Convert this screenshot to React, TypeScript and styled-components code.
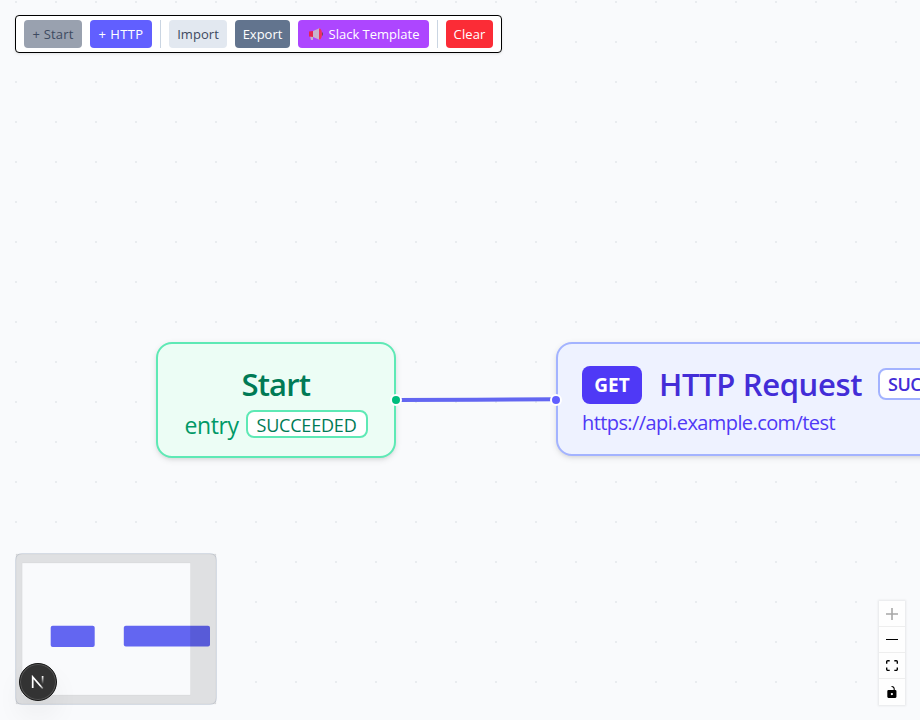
import React from "react";
import styled, { createGlobalStyle } from "styled-components";

const GlobalStyle = createGlobalStyle`
  * { box-sizing: border-box; }
  body { margin: 0; overflow: hidden; font-family: "Open Sans", "Noto Sans", sans-serif; }
`;

const Canvas = styled.main`
  position: relative;
  width: 920px;
  height: 720px;
  overflow: hidden;
  background: #f9fafc;
`;

const Layer = styled.svg`
  position: absolute;
  inset: 0;
  width: 920px;
  height: 720px;
`;

const Toolbar = styled.div`
  position: absolute;
  left: 15px;
  top: 15px;
  width: 487px;
  height: 38px;
  display: flex;
  align-items: center;
  gap: 8px;
  padding: 0 8px;
  background: #fff;
  border: 1px solid #000;
  border-radius: 4px;
  box-shadow: 0 1px 3px rgba(0, 0, 0, 0.1);
`;

const ToolButton = styled.button<{ $w: number; $bg: string; $fg?: string; $ls?: number }>`
  display: flex;
  flex: none;
  align-items: center;
  justify-content: center;
  width: ${(p) => p.$w}px;
  height: 28px;
  padding: 0;
  border: 0;
  border-radius: 4px;
  background: ${(p) => p.$bg};
  color: ${(p) => p.$fg ?? "#fff"};
  font: 500 13px/20px "Open Sans", "Noto Sans", sans-serif;
  letter-spacing: ${(p) => p.$ls ?? 0}px;
  white-space: pre;
`;

const Divider = styled.span`
  flex: none;
  width: 1px;
  height: 28px;
  background: #cad5e2;
`;

const MegaphoneIcon = styled.svg`
  flex: none;
  width: 15px;
  height: 14px;
  margin-right: 6px;
`;

const Node = styled.section<{ $x: number; $w: number; $h: number; $bg: string; $line: string }>`
  position: absolute;
  left: ${(p) => p.$x}px;
  top: 342px;
  width: ${(p) => p.$w}px;
  height: ${(p) => p.$h}px;
  border: 2px solid ${(p) => p.$line};
  border-radius: 16px;
  background: ${(p) => p.$bg};
  box-shadow: 0 2px 6px rgba(0, 0, 0, 0.1), 0 2px 4px -2px rgba(0, 0, 0, 0.1);
`;

const StartBody = styled.div`
  display: flex;
  flex-direction: column;
  align-items: center;
  padding-top: 20px;
`;

const HttpBody = styled.div`
  padding: 22px 24px;
`;

const Row = styled.div<{ $gap: number; $h: number }>`
  display: flex;
  align-items: center;
  gap: ${(p) => p.$gap}px;
  height: ${(p) => p.$h}px;
  white-space: nowrap;
`;

const Title = styled.div<{ $color: string; $w: number; $ls: number }>`
  flex: none;
  width: ${(p) => p.$w}px;
  height: 42px;
  color: ${(p) => p.$color};
  font-size: 31px;
  font-weight: 600;
  line-height: 40px;
  letter-spacing: ${(p) => p.$ls}px;
  white-space: nowrap;
`;

const Entry = styled.span`
  width: 55px;
  color: #009966;
  font-size: 23px;
  line-height: 32px;
  letter-spacing: -0.4px;
  padding-top: 2px;
`;

const Status = styled.span<{ $w: number; $h: number; $line: string; $fg: string; $weight: number; $ls: number }>`
  flex: none;
  display: flex;
  align-items: center;
  width: ${(p) => p.$w}px;
  height: ${(p) => p.$h}px;
  border: 2px solid ${(p) => p.$line};
  border-radius: 8px;
  background: #fff;
  color: ${(p) => p.$fg};
  font-size: 18px;
  line-height: 24px;
  font-weight: ${(p) => p.$weight};
  letter-spacing: ${(p) => p.$ls}px;
`;

const EntryStatus = styled(Status)`
  padding: 1px 0 0 9px;
`;

const RequestStatus = styled(Status)`
  margin-bottom: 2px;
  padding: 0 0 0 8px;
`;

const Method = styled.span`
  flex: none;
  display: flex;
  align-items: center;
  justify-content: center;
  width: 60px;
  height: 38px;
  border-radius: 8px;
  background: #4f39f6;
  color: #fff;
  font-size: 19px;
  font-weight: 700;
`;

const Url = styled.div`
  margin-top: 4px;
  color: #4f39f6;
  font-size: 20px;
  line-height: 30px;
  letter-spacing: -0.59px;
`;

const Port = styled.i<{ $x: number; $bg: string }>`
  position: absolute;
  left: ${(p) => p.$x}px;
  top: 394px;
  width: 12px;
  height: 12px;
  border: 2px solid #fff;
  border-radius: 50%;
  background: ${(p) => p.$bg};
`;

const MiniMap = styled.div`
  position: absolute;
  left: 15px;
  top: 553px;
  width: 202px;
  height: 152px;
  border: 1px solid #d9dfe8;
  border-radius: 7px;
  background: #f9fafc;

  svg { display: block; overflow: visible; }
`;

const Badge = styled.div`
  position: absolute;
  left: 19px;
  top: 663px;
  width: 38px;
  height: 38px;
  display: flex;
  align-items: center;
  justify-content: center;
  border: 1px solid #151515;
  border-radius: 50%;
  background: #333;
  box-shadow: inset 0 0 0 1px #555, 0 16px 32px -8px rgba(0, 0, 0, 0.16);
`;

const Controls = styled.div`
  position: absolute;
  right: 15px;
  bottom: 15px;
  display: flex;
  flex-direction: column;
  width: 26px;
  box-shadow: 0 0 2px 1px rgba(0, 0, 0, 0.08);
`;

const ControlButton = styled.button`
  display: flex;
  align-items: center;
  justify-content: center;
  width: 26px;
  height: 26px;
  padding: 4px;
  border: 0;
  border-bottom: 1px solid #eee;
  background: #fefefe;

  &:last-child { border-bottom: 0; }
  svg { width: 100%; max-width: 12px; max-height: 12px; }
`;

const controls = [
  { label: "Zoom in", box: "0 0 32 32", fill: "#a7a7a7", d: "M32 18.133H18.133V32h-4.266V18.133H0v-4.266h13.867V0h4.266v13.867H32z" },
  { label: "Zoom out", box: "0 0 32 5", fill: "#000", d: "M0 0h32v4.2H0z" },
  { label: "Fit view", box: "0 0 32 30", fill: "#000", d: "M3.692 4.63c0-.53.4-.938.939-.938h5.215V0H4.708C2.13 0 0 2.054 0 4.63v5.216h3.692V4.631zM27.354 0h-5.2v3.692h5.17c.53 0 .984.4.984.939v5.215H32V4.631A4.624 4.624 0 0027.354 0zm.954 24.83c0 .532-.4.94-.939.94h-5.215v3.768h5.215c2.577 0 4.631-2.13 4.631-4.707v-5.139h-3.692v5.139zm-23.677.94c-.531 0-.939-.4-.939-.94v-5.138H0v5.139c0 2.577 2.13 4.707 4.708 4.707h5.138V25.77H4.631z" },
  { label: "Toggle interactivity", box: "0 0 25 32", fill: "#000", d: "M21.333 10.667H19.81V7.619C19.81 3.429 16.38 0 12.19 0c-4.114 1.828-1.37 2.133.305 2.438 1.676.305 4.42 2.59 4.42 5.181v3.048H3.047A3.056 3.056 0 000 13.714v15.238A3.056 3.056 0 003.048 32h18.285a3.056 3.056 0 003.048-3.048V13.714a3.056 3.056 0 00-3.048-3.047zM12.19 24.533a3.056 3.056 0 01-3.047-3.047 3.056 3.056 0 013.047-3.048 3.056 3.056 0 013.048 3.048 3.056 3.056 0 01-3.048 3.047z" },
];

function Megaphone() {
  return (
    <MegaphoneIcon viewBox="0 0 15 14">
      <path d="M2 9h3v4H3z" fill="#c3b4cf" />
      <path d="M1 4.5 5 4v6l-4-.6z" fill="#e6274f" />
      <path d="M5 4 12 1v12L5 10z" fill="#c7b5cc" />
      <path d="M11 1.2c2 .2 3 2.5 3 5.8s-1 5.6-3 5.8z" fill="#f0315d" />
      <path d="M14 5.5h1v3h-1z" fill="#6b4a68" />
    </MegaphoneIcon>
  );
}

export default function App() {
  return (
    <Canvas>
      <GlobalStyle />
      <Layer>
        <defs>
          <pattern id="dots" x="-4" y="-18" width="40" height="40" patternUnits="userSpaceOnUse">
            <circle cx="20" cy="20" r="1" fill="#e5e7eb" />
          </pattern>
        </defs>
        <rect width="920" height="720" fill="url(#dots)" />
      </Layer>

      <Node $x={156} $w={240} $h={116} $bg="#ecfdf5" $line="#5ee9b5">
        <StartBody>
          <Title $color="#007a55" $w={69} $ls={-0.85}>Start</Title>
          <Row $gap={6} $h={36}>
            <Entry>entry</Entry>
            <EntryStatus $w={122} $h={28} $line="#5ee9b5" $fg="#007a55" $weight={400} $ls={-0.2}>SUCCEEDED</EntryStatus>
          </Row>
        </StartBody>
      </Node>

      <Node $x={556} $w={470} $h={114} $bg="#eef2ff" $line="#a3b3ff">
        <HttpBody>
          <Row $gap={17} $h={38}>
            <Method>GET</Method>
            <Title $color="#432dd7" $w={202} $ls={-0.35}>HTTP Request</Title>
            <RequestStatus $w={122} $h={32} $line="#a3b3ff" $fg="#432dd7" $weight={600} $ls={-0.5}>SUCCEEDED</RequestStatus>
          </Row>
          <Url>https://api.example.com/test</Url>
        </HttpBody>
      </Node>

      <Layer>
        <path d="M396 400C476 400 476 399.3 556 399.3" fill="none" stroke="#6366f1" strokeWidth="4" />
      </Layer>
      <Port $x={390} $bg="#00bc7d" />
      <Port $x={550} $bg="#615fff" />

      <Toolbar>
        <ToolButton $w={58} $bg="#99a1af" $fg="#3d4a60" $ls={0.2}>+ Start</ToolButton>
        <ToolButton $w={62} $bg="#615fff" $ls={0.4}>+ HTTP</ToolButton>
        <Divider />
        <ToolButton $w={58} $bg="#e2e8f0" $fg="#3d4a60" $ls={0.05}>Import</ToolButton>
        <ToolButton $w={55} $bg="#62748e">Export</ToolButton>
        <ToolButton $w={131} $bg="#ad46ff"><Megaphone />Slack Template</ToolButton>
        <Divider />
        <ToolButton $w={47} $bg="#fb2c36" $ls={0.1}>Clear</ToolButton>
      </Toolbar>

      <MiniMap>
        <svg width="200" height="150">
          <rect x="34.7" y="71.8" width="44" height="21.2" rx="2" fill="#6366f1" />
          <rect x="107.8" y="71.8" width="86.2" height="20.7" rx="2" fill="#6366f1" />
          <path d="M0 0H200V150H0ZM6.2 9V141H174.5V9Z" fillRule="evenodd" fill="rgba(0,0,0,0.1)" stroke="rgba(0,0,0,0.03)" />
        </svg>
      </MiniMap>

      <Badge>
        <svg width="14" height="14" viewBox="0 0 14 14" fill="none">
          <defs>
            <linearGradient id="diagonal" x1="6" y1="6" x2="13" y2="14" gradientUnits="userSpaceOnUse">
              <stop offset="0.5" stopColor="#fff" />
              <stop offset="1" stopColor="#fff" stopOpacity="0.2" />
            </linearGradient>
            <linearGradient id="stem" x1="0" y1="1" x2="0" y2="9" gradientUnits="userSpaceOnUse">
              <stop stopColor="#fff" />
              <stop offset="1" stopColor="#fff" stopOpacity="0" />
            </linearGradient>
          </defs>
          <path d="M1.7 13V2L11.8 13.5" stroke="url(#diagonal)" strokeWidth="1.7" />
          <path d="M11.6 1v9" stroke="url(#stem)" strokeWidth="1.7" />
        </svg>
      </Badge>

      <Controls>
        {controls.map((c) => (
          <ControlButton key={c.label} aria-label={c.label}>
            <svg viewBox={c.box} fill={c.fill}><path d={c.d} /></svg>
          </ControlButton>
        ))}
      </Controls>
    </Canvas>
  );
}
